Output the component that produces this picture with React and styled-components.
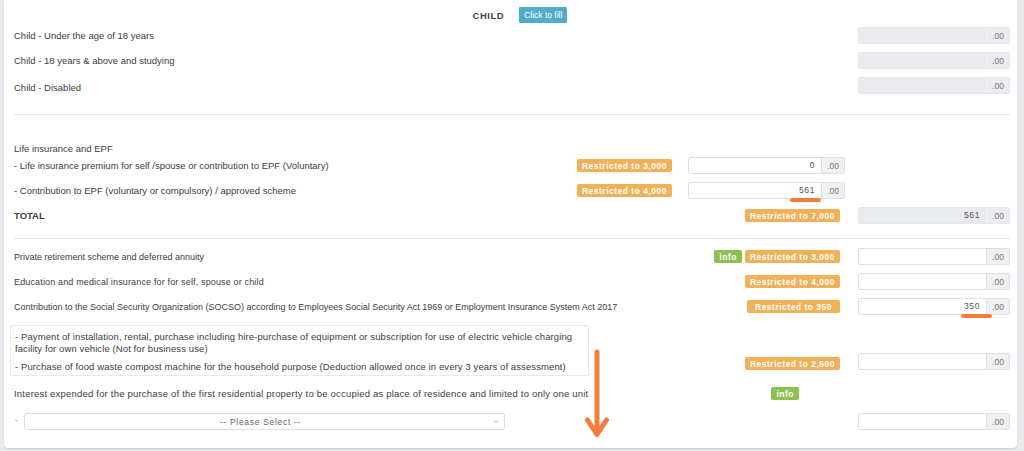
import React from 'react';
import styled, { createGlobalStyle } from 'styled-components';

const GlobalStyle = createGlobalStyle`
	html, body {
		margin: 0;
		padding: 0;
		background: #e8eaed;
	}
	body {
		font-family: "Liberation Sans", Arial, sans-serif;
		color: #3d3d3d;
	}
`;

const Page = styled.div`
	width: 1024px;
	height: 451px;
	overflow: hidden;
	padding: 0 7px 0 4px;
	box-sizing: border-box;
`;

const Card = styled.div`
	position: relative;
	background: #fff;
	border-radius: 0 0 4px 4px;
	box-shadow: 0 1px 2px rgba(0, 0, 0, 0.14);
	padding: 7px 7px 18px 10px;
	display: flex;
	flex-direction: column;
`;

const Header = styled.div`
	height: 16px;
	display: flex;
	align-items: center;
	justify-content: center;
	gap: 15px;
	padding-left: 16px;
`;

const Title = styled.div`
	font-size: 9.5px;
	font-weight: 700;
	letter-spacing: 0.5px;
	color: #444;
`;

const FillButton = styled.button`
	height: 16px;
	padding: 0 5px;
	border: none;
	border-radius: 1px;
	background: #4fadc8;
	color: #fff;
	font-family: inherit;
	font-size: 8.5px;
	cursor: pointer;
`;

const Section = styled.div`
	display: flex;
	flex-direction: column;
	gap: 8px;
	margin-top: ${(p) => p.$top}px;
`;

const Row = styled.div`
	display: flex;
	align-items: center;
	height: ${(p) => p.$h || 17}px;
	margin-top: ${(p) => p.$top || 0}px;
`;

const Label = styled.div`
	flex: 1;
	min-width: 0;
	white-space: nowrap;
	font-size: ${(p) => p.$size || 9.5}px;
	letter-spacing: ${(p) => p.$ls || 0}px;
	font-weight: ${(p) => (p.$bold ? 700 : 400)};
	padding-top: ${(p) => p.$shift || 0}px;
`;

const Tags = styled.div`
	display: flex;
	gap: 3px;
	margin-right: 16px;
`;

const MidSlot = styled.div`
	width: 157px;
	flex: none;
	display: flex;
	align-items: center;
	justify-content: flex-end;
	gap: 3px;
	padding-right: ${(p) => (p.$pad === undefined ? 5 : p.$pad)}px;
	box-sizing: border-box;
`;

const MidField = styled.div`
	width: 157px;
	flex: none;
`;

const RightSlot = styled.div`
	width: 152px;
	flex: none;
	margin-left: 13px;
`;

const Badge = styled.span`
	display: inline-flex;
	align-items: center;
	justify-content: center;
	height: 13px;
	min-width: ${(p) => (p.$tone === 'info' ? 0 : 93)}px;
	padding: 0 5px;
	box-sizing: border-box;
	border-radius: 2px;
	background: ${(p) => (p.$tone === 'info' ? '#8cc152' : '#f1b158')};
	color: #fff;
	font-weight: 700;
	font-size: 8.5px;
	letter-spacing: 0.5px;
	white-space: nowrap;
`;

const InputGroup = styled.div`
	position: relative;
	display: flex;
	height: 17px;
	box-sizing: border-box;
	border: 1px solid ${(p) => (p.$disabled ? '#e4e6e9' : '#dcdfe3')};
	border-radius: 2px;
	background: ${(p) => (p.$disabled ? '#e9ebee' : '#fff')};
`;

const InputValue = styled.div`
	flex: 1;
	text-align: right;
	padding-right: 6px;
	font-size: 8.5px;
	line-height: 15px;
	letter-spacing: 0.6px;
	color: #555;
`;

const Addon = styled.div`
	width: 22px;
	flex: none;
	display: flex;
	align-items: center;
	justify-content: center;
	background: ${(p) => (p.$disabled ? '#eaecef' : '#eef0f2')};
	border-left: 1px solid ${(p) => (p.$disabled ? '#f2f3f5' : '#dcdfe3')};
	font-size: 8.5px;
	color: #777;
`;

const Mark = styled.span`
	position: absolute;
	right: ${(p) => p.$right}px;
	bottom: -4px;
	width: 31px;
	height: 4px;
	border-radius: 2px;
	background: #f47c3c;
`;

const Divider = styled.div`
	height: 1px;
	background: #e7e7e7;
	margin-top: ${(p) => p.$top}px;
`;

const BoxRow = styled.div`
	display: flex;
	align-items: flex-end;
	margin-top: 10px;

	${MidSlot}, ${RightSlot} {
		margin-bottom: 6px;
	}
`;

const NoteBox = styled.div`
	width: 579px;
	margin-left: -4px;
	margin-right: auto;
	box-sizing: border-box;
	border: 1px solid #e9e9e9;
	border-radius: 2px;
	padding: 5px 4px 2px;
	font-size: 9.5px;
	line-height: 12px;
	letter-spacing: 0.1px;
	white-space: nowrap;
`;

const Note = styled.div`
	& + & {
		margin-top: 6px;
	}
`;

const SelectField = styled.div`
	flex: 1;
	display: flex;
	align-items: center;
`;

const Dash = styled.span`
	width: 9px;
	padding-left: 1px;
	margin-top: -4px;
	font-size: 7px;
	color: #666;
`;

const SelectBox = styled.div`
	position: relative;
	width: 481px;
	height: 17px;
	box-sizing: border-box;
	border: 1px solid #dcdfe3;
	border-radius: 2px;
	display: flex;
	align-items: center;
	justify-content: center;
	padding-right: 8px;
	font-size: 8.5px;
	letter-spacing: 0.7px;
	color: #666;

	svg {
		position: absolute;
		right: 5px;
		top: 5px;
	}
`;

const Arrow = styled.svg`
	position: absolute;
	left: 581px;
	top: 348px;
`;

const Amount = ({ value, disabled, mark }) => (
	<InputGroup $disabled={disabled}>
		<InputValue>{value}</InputValue>
		<Addon $disabled={disabled}>.00</Addon>
		{mark !== undefined && <Mark $right={mark} />}
	</InputGroup>
);

const App = () => {
	return (
		<>
			<GlobalStyle />
			<Page>
				<Card>
					<Header>
						<Title>CHILD</Title>
						<FillButton>Click to fill</FillButton>
					</Header>

					<Section $top={4}>
						<Row>
							<Label>Child - Under the age of 18 years</Label>
							<MidSlot />
							<RightSlot>
								<Amount disabled />
							</RightSlot>
						</Row>
						<Row>
							<Label>Child - 18 years &amp; above and studying</Label>
							<MidSlot />
							<RightSlot>
								<Amount disabled />
							</RightSlot>
						</Row>
						<Row>
							<Label $shift={3}>Child - Disabled</Label>
							<MidSlot />
							<RightSlot>
								<Amount disabled />
							</RightSlot>
						</Row>
					</Section>

					<Divider $top={20} />

					<Row $h={14} $top={26}>
						<Label>Life insurance and EPF</Label>
					</Row>

					<Section $top={2}>
						<Row>
							<Label>- Life insurance premium for self /spouse or contribution to EPF (Voluntary)</Label>
							<Tags>
								<Badge>Restricted to 3,000</Badge>
							</Tags>
							<MidField>
								<Amount value="0" />
							</MidField>
							<RightSlot />
						</Row>
						<Row>
							<Label>- Contribution to EPF (voluntary or compulsory) / approved scheme</Label>
							<Tags>
								<Badge>Restricted to 4,000</Badge>
							</Tags>
							<MidField>
								<Amount value="561" mark={23} />
							</MidField>
							<RightSlot />
						</Row>
						<Row>
							<Label $bold>TOTAL</Label>
							<MidSlot>
								<Badge>Restricted to 7,000</Badge>
							</MidSlot>
							<RightSlot>
								<Amount value="561" disabled />
							</RightSlot>
						</Row>
					</Section>

					<Divider $top={14} />

					<Section $top={9}>
						<Row>
							<Label $size={9}>Private retirement scheme and deferred annuity</Label>
							<MidSlot>
								<Badge $tone="info">info</Badge>
								<Badge>Restricted to 3,000</Badge>
							</MidSlot>
							<RightSlot>
								<Amount />
							</RightSlot>
						</Row>
						<Row>
							<Label $size={9} $ls={0.15}>Education and medical insurance for for self, spouse or child</Label>
							<MidSlot>
								<Badge>Restricted to 4,000</Badge>
							</MidSlot>
							<RightSlot>
								<Amount />
							</RightSlot>
						</Row>
						<Row>
							<Label $size={9}>
								Contribution to the Social Security Organization (SOCSO) according to Employees Social Security Act 1969 or Employment Insurance System Act 2017
							</Label>
							<MidSlot>
								<Badge>Restricted to 350</Badge>
							</MidSlot>
							<RightSlot>
								<Amount value="350" mark={17} />
							</RightSlot>
						</Row>
					</Section>

					<BoxRow>
						<NoteBox>
							<Note>
								- Payment of installation, rental, purchase including hire-purchase of equipment or subscription for use of electric vehicle charging
								<br />
								facility for own vehicle (Not for business use)
							</Note>
							<Note>- Purchase of food waste compost machine for the household purpose (Deduction allowed once in every 3 years of assessment)</Note>
						</NoteBox>
						<MidSlot>
							<Badge>Restricted to 2,500</Badge>
						</MidSlot>
						<RightSlot>
							<Amount />
						</RightSlot>
					</BoxRow>

					<Row $h={13} $top={11}>
						<Label $ls={0.2}>
							Interest expended for the purchase of the first residential property to be occupied as place of residence and limited to only one unit
						</Label>
						<MidSlot $pad={46}>
							<Badge $tone="info">info</Badge>
						</MidSlot>
						<RightSlot />
					</Row>

					<Row $top={13}>
						<SelectField>
							<Dash>-</Dash>
							<SelectBox>
								-- Please Select --
								<svg width="6" height="5" viewBox="0 0 6 5">
									<path d="M0.8 1.2 L3 3.4 L5.2 1.2" fill="none" stroke="#999" strokeWidth="0.9" />
								</svg>
							</SelectBox>
						</SelectField>
						<MidSlot />
						<RightSlot>
							<Amount />
						</RightSlot>
					</Row>

					<Arrow width="24" height="94" viewBox="0 0 24 94">
						<path d="M12 4 V86 M2.5 72 L12 86.5 L21.5 72" fill="none" stroke="#f47c3c" strokeWidth="5" strokeLinecap="round" strokeLinejoin="round" />
					</Arrow>
				</Card>
			</Page>
		</>
	);
};

export default App;
